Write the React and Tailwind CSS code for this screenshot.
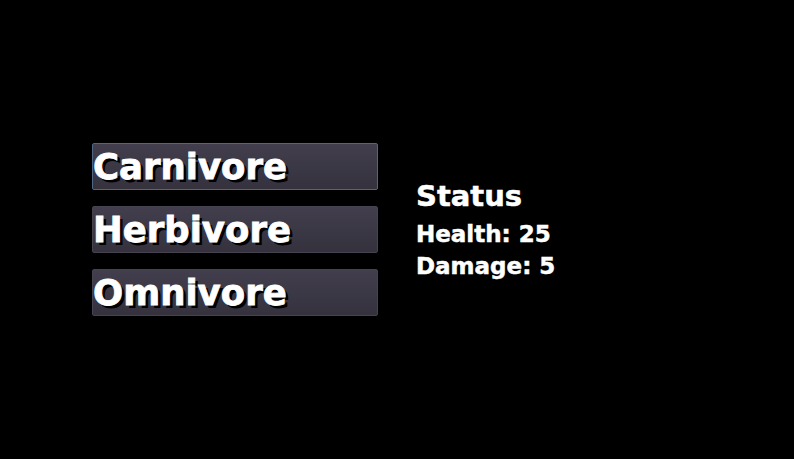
const diets = ['Carnivore', 'Herbivore', 'Omnivore'];

// Diet picker on the left, creature stats on the right
export default function App() {
  return (
    <div
      className="h-[459px] w-full bg-black flex items-center pl-[92px] gap-[38px]"
      style={{ fontFamily: '"DejaVu Sans", "Open Sans", sans-serif' }}
    >
      <div className="flex flex-col gap-[16px]">
        {diets.map((name, i) => (
          <button
            key={name}
            className={`w-[286px] h-[47px] flex items-center text-left rounded-[2px] border bg-gradient-to-b from-[#423e4d] to-[#35323e] ${
              i === 0 ? 'border-[#4e6784]' : 'border-[#46424f]'
            }`}
          >
            <span className="text-white font-bold text-[35.5px] leading-none [-webkit-text-stroke:0.8px_white] [text-shadow:3px_3px_0_#000]">
              {name}
            </span>
          </button>
        ))}
      </div>

      <div className="text-white font-bold [-webkit-text-stroke:0.5px_white]">
        <div className="text-[29px] leading-[36px] mb-[4px]">Status</div>
        <div className="text-[23px] leading-[32px]">Health: 25</div>
        <div className="text-[23px] leading-[32px]">Damage: 5</div>
      </div>
    </div>
  );
}
